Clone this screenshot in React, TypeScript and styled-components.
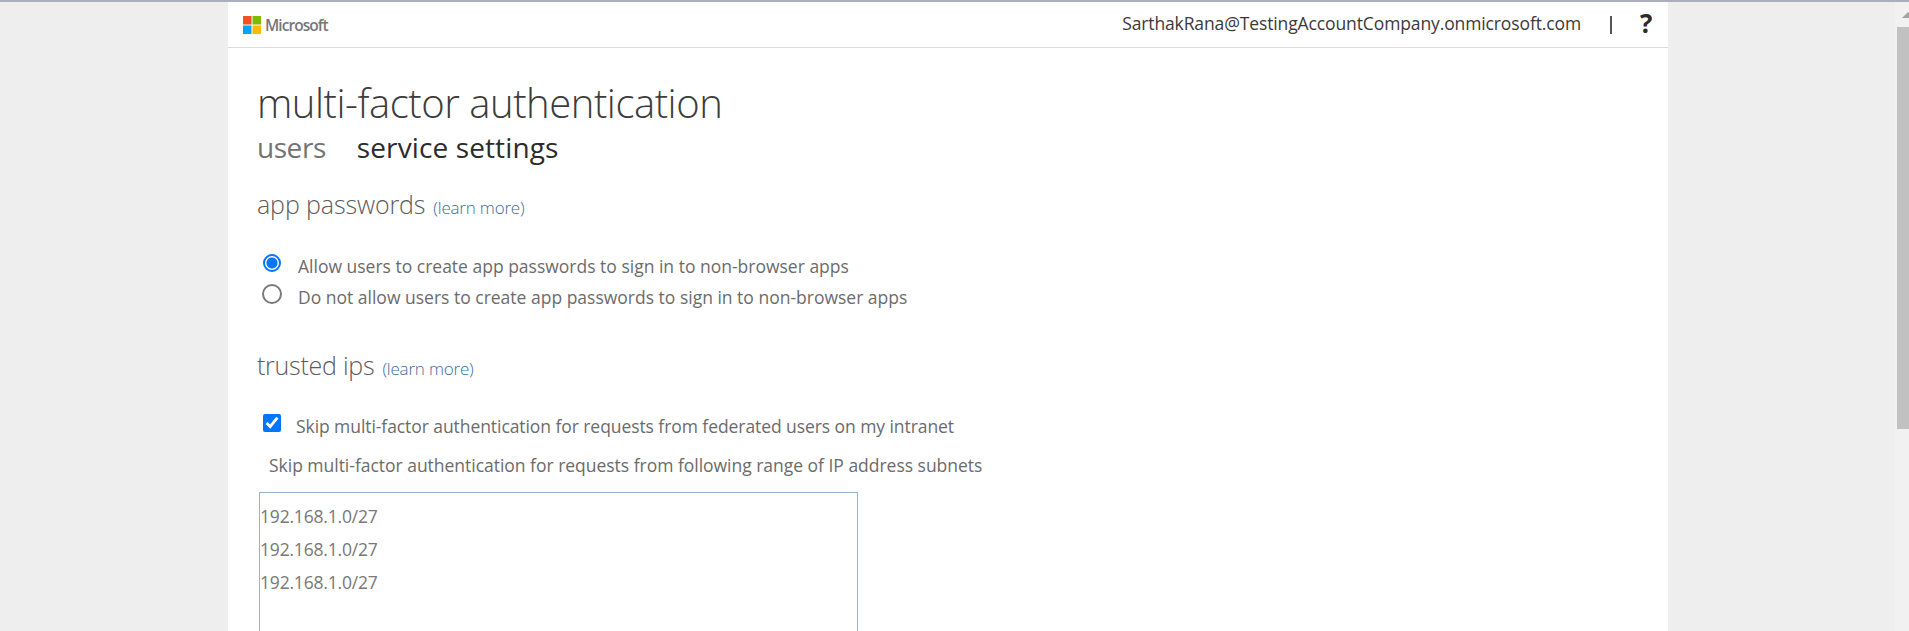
import React from "react";
import styled, { createGlobalStyle } from "styled-components";

const GlobalStyle = createGlobalStyle`
  * { box-sizing: border-box; }
  body {
    margin: 0;
    overflow: hidden;
    background: #eeeeee;
    font-family: "Open Sans", "Noto Sans", sans-serif;
  }
`;

const Frame = styled.div`
  display: flex;
  height: 631px;
  overflow: hidden;
  border-top: 2px solid #abaebb;
`;

const Viewport = styled.div`
  flex: 1;
  min-width: 0;
  padding-left: 228px;
`;

const Page = styled.div`
  width: 1440px;
  height: 100%;
  background: #fff;
`;

const Header = styled.header`
  display: flex;
  align-items: center;
  justify-content: space-between;
  height: 46px;
  padding: 0 14px 3px 15px;
  border-bottom: 1px solid #dcdcdc;
`;

const Brand = styled.div`
  display: flex;
  align-items: center;
  gap: 4px;
  padding-top: 4px;
`;

const BrandName = styled.span`
  font-size: 15.5px;
  line-height: 20px;
  font-weight: 600;
  letter-spacing: -0.95px;
  color: #777;
`;

const Account = styled.div`
  display: flex;
  align-items: center;
  font-size: 17.5px;
  line-height: 24px;
  color: #3a3a3a;
`;

const Email = styled.span`
  letter-spacing: -0.12px;
`;

const Divider = styled.span`
  width: 2px;
  height: 18px;
  margin: 4px 28px 0 29px;
  background: #555;
`;

const Help = styled.span`
  width: 14px;
  font-size: 26px;
  line-height: 24px;
  font-weight: 700;
  color: #2b2b2b;
`;

const Content = styled.main`
  padding: 30px 0 0 29px;
`;

const Title = styled.h1`
  margin: 0 0 -1px;
  font-size: 40px;
  line-height: 50px;
  font-weight: 300;
  letter-spacing: -0.46px;
  color: #3c3c3c;
`;

const Tabs = styled.nav`
  display: flex;
  gap: 31px;
  font-size: 28px;
  line-height: 40px;
`;

const Tab = styled.span<{ $active?: boolean }>`
  color: ${(p) => (p.$active ? "#2b2b2b" : "#737373")};
  letter-spacing: ${(p) => (p.$active ? "0.12px" : "-0.45px")};
`;

const Section = styled.section<{ $top: number }>`
  padding-top: ${(p) => p.$top}px;
`;

const SectionTitle = styled.h2<{ $after: number; $tracking: number }>`
  display: flex;
  align-items: baseline;
  gap: 8px;
  height: 34px;
  margin: 0 0 ${(p) => p.$after}px;
  font-size: 25px;
  line-height: 34px;
  font-weight: 300;
  letter-spacing: ${(p) => p.$tracking}px;
  color: #5c5c5c;
`;

const LearnMore = styled.a`
  font-size: 17px;
  letter-spacing: -0.2px;
  color: #3d6c96;
`;

const Option = styled.label<{ $gap: number; $tracking?: number }>`
  display: flex;
  height: 31px;
  gap: ${(p) => p.$gap}px;
  padding-left: 6px;
  font-size: 17.5px;
  line-height: 31px;
  letter-spacing: ${(p) => p.$tracking ?? 0}px;
  color: #6b6b6b;
`;

const Checkbox = styled.input`
  flex: none;
  width: 18px;
  height: 18px;
  margin: 3px 0 0;
`;

const Radio = styled.input`
  appearance: none;
  flex: none;
  width: 20px;
  height: 20px;
  margin: 2px -1px 0;
  border: 2px solid #7a7a7a;
  border-radius: 50%;

  &:checked {
    width: 18px;
    height: 18px;
    margin: 3px 0 0;
    border-color: #0075ff;
    background: radial-gradient(circle, #0075ff 5px, #fff 6px);
  }
`;

const SubnetLabel = styled.label`
  display: block;
  margin: 8px 0 11px;
  padding-left: 12px;
  font-size: 17.5px;
  line-height: 31px;
  letter-spacing: -0.02px;
  color: #6b6b6b;
`;

const SubnetInput = styled.textarea`
  display: block;
  width: 599px;
  height: 180px;
  margin-left: 2px;
  padding: 7px 0 0 0;
  border: 1px solid #9ab3ca;
  border-radius: 0;
  outline: none;
  resize: none;
  overflow: hidden;
  font-family: inherit;
  font-size: 17.5px;
  line-height: 33px;
  letter-spacing: -0.19px;
  color: #787878;
`;

const ScrollTrack = styled.div`
  width: 14px;
  padding-left: 2px;
  background: #f1f1f1;
  overflow: hidden;
`;

const ScrollUp = styled.svg`
  display: block;
  width: 12px;
  height: 25px;
`;

const ScrollThumb = styled.div`
  height: 402px;
  background: #c1c1c1;
`;

const MicrosoftMark = () => (
  <svg width="18" height="18" viewBox="0 0 18 18">
    <rect width="8.5" height="8.5" fill="#f65022" />
    <rect x="9.5" width="8.5" height="8.5" fill="#7fba00" />
    <rect y="9.5" width="8.5" height="8.5" fill="#00a4ef" />
    <rect x="9.5" y="9.5" width="8.5" height="8.5" fill="#ffb900" />
  </svg>
);

export default function App() {
  return (
    <>
      <GlobalStyle />
      <Frame>
        <Viewport>
          <Page>
            <Header>
              <Brand>
                <MicrosoftMark />
                <BrandName>Microsoft</BrandName>
              </Brand>
              <Account>
                <Email>SarthakRana@TestingAccountCompany.onmicrosoft.com</Email>
                <Divider />
                <Help>?</Help>
              </Account>
            </Header>
            <Content>
              <Title>multi-factor authentication</Title>
              <Tabs>
                <Tab>users</Tab>
                <Tab $active>service settings</Tab>
              </Tabs>
              <Section $top={20}>
                <SectionTitle $after={30} $tracking={-0.12}>
                  app passwords <LearnMore>(learn more)</LearnMore>
                </SectionTitle>
                <Option $gap={17}>
                  <Radio type="radio" name="app-passwords" defaultChecked />
                  Allow users to create app passwords to sign in to non-browser apps
                </Option>
                <Option $gap={17}>
                  <Radio type="radio" name="app-passwords" />
                  Do not allow users to create app passwords to sign in to non-browser apps
                </Option>
              </Section>
              <Section $top={35}>
                <SectionTitle $after={29} $tracking={-0.25}>
                  trusted ips <LearnMore>(learn more)</LearnMore>
                </SectionTitle>
                <Option $gap={15} $tracking={-0.07}>
                  <Checkbox type="checkbox" defaultChecked />
                  Skip multi-factor authentication for requests from federated users on my intranet
                </Option>
                <SubnetLabel htmlFor="subnets">
                  Skip multi-factor authentication for requests from following range of IP address subnets
                </SubnetLabel>
                <SubnetInput
                  id="subnets"
                  spellCheck={false}
                  defaultValue={"192.168.1.0/27\n192.168.1.0/27\n192.168.1.0/27"}
                />
              </Section>
            </Content>
          </Page>
        </Viewport>
        <ScrollTrack>
          <ScrollUp viewBox="0 0 12 25">
            <path d="M5 16 11 10 17 16Z" fill="#a3a3a3" />
          </ScrollUp>
          <ScrollThumb />
        </ScrollTrack>
      </Frame>
    </>
  );
}
